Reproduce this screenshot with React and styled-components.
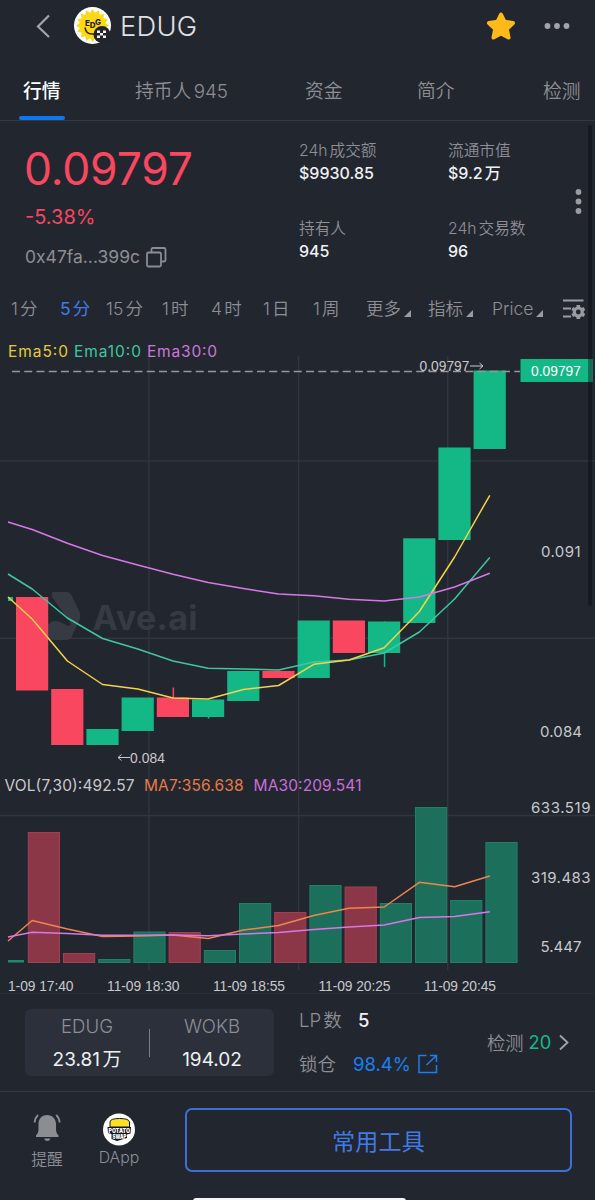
import React, { useState } from "react";
import styled, { createGlobalStyle, ThemeProvider } from "styled-components";

const theme = {
  bg: "#22262f",
  card: "#2b303b",
  line: "#353943",
  text: "#f0f1f3",
  muted: "#8d8f95",
  up: "#14b887",
  down: "#f8475f",
  blue: "#3f7be8",
  link: "#1a80f0",
};

const GlobalStyle = createGlobalStyle`
  * {
    box-sizing: border-box;
  }

  body {
    margin: 0;
    background: #22262f;
    font-family: Inter, "Noto Sans CJK SC", sans-serif;
    text-autospace: normal;
  }

  button {
    font-family: inherit;
    background: none;
    border: none;
    padding: 0;
    cursor: pointer;
  }
`;

const Page = styled.div`
  position: relative;
  width: 595px;
  height: 1200px;
  overflow: hidden;
  display: flex;
  flex-direction: column;
  background: ${({ theme }) => theme.bg};
  color: ${({ theme }) => theme.muted};
  white-space: nowrap;
`;

const ScrollThumb = styled.div`
  position: absolute;
  top: 125px;
  right: 3px;
  width: 4px;
  height: 481px;
  border-radius: 2px;
  background: rgba(10, 10, 16, 0.42);
`;

// Header
const Header = styled.header`
  flex: none;
  display: flex;
  align-items: center;
  height: 52px;
  padding: 0 24px 0 36px;
`;

const Avatar = styled.svg`
  margin: 0 8px 0 24px;
`;

const TokenName = styled.h1`
  flex: 1;
  margin: 0;
  padding-top: 2px;
  font-size: 27.3px;
  line-height: 52px;
  font-weight: 350;
  letter-spacing: 0.3px;
  color: #e0e1e4;
`;

const MoreIcon = styled.svg`
  margin-left: 27px;
`;

// Tabs
const TabBar = styled.nav`
  flex: none;
  display: grid;
  grid-template-columns: 116px 170px 112px 126px 52px;
  height: 69px;
  padding-left: 19px;
  border-bottom: 1px solid ${({ theme }) => theme.line};
`;

const Tab = styled.button`
  display: flex;
  flex-direction: column;
  justify-content: space-between;
  justify-self: start;
  align-items: flex-start;
  padding-top: 26px;
  font-size: 18.8px;
  line-height: 28px;
  font-weight: ${({ $active }) => ($active ? 500 : 350)};
  color: ${({ $active, theme }) => ($active ? "#fff" : theme.muted)};

  &::after {
    content: "";
    height: 4px;
    width: ${({ $active }) => ($active ? 46 : 0)}px;
    border-radius: 2px;
    background: #0a78f5;
  }
`;

const TabText = styled.span`
  padding-left: ${({ $active }) => ($active ? 4 : 0)}px;
`;

// Price summary
const Summary = styled.section`
  flex: none;
  display: grid;
  grid-template-columns: 274px 149px 122px 10px;
  height: 169px;
  padding: 19px 0 0 25px;
`;

const PriceBlock = styled.div`
  display: flex;
  flex-direction: column;
  padding-top: 5px;
  color: ${({ theme }) => theme.down};
`;

const Price = styled.div`
  font-size: 44.5px;
  line-height: 48px;
  letter-spacing: -0.2px;
  margin-left: -1px;
`;

const Change = styled.div`
  margin-top: 12px;
  font-size: 20px;
  line-height: 24px;
`;

const Address = styled.div`
  display: flex;
  align-items: center;
  gap: 6px;
  margin-top: 16px;
  font-size: 17.5px;
  line-height: 24px;
  color: ${({ theme }) => theme.muted};
`;

const StatColumn = styled.div`
  display: flex;
  flex-direction: column;
  gap: 34px;
`;

const Stat = styled.div`
  display: grid;
  grid-template-rows: 22px 22px;
  line-height: 22px;
`;

const StatLabel = styled.span`
  font-size: 15.7px;
  font-weight: 350;
`;

const StatValue = styled.span`
  font-size: 16px;
  font-weight: 450;
  color: ${({ theme }) => theme.text};
`;

const Kebab = styled.svg`
  margin-top: 48px;
`;

// Interval bar
const Intervals = styled.div`
  flex: none;
  display: grid;
  grid-template-columns: 49px 46px 56px 49px 52px 50px 53px 62px 64px 71px 24px;
  align-items: center;
  height: 40px;
  padding: 0 0 3px 11px;
`;

const Interval = styled.button`
  display: flex;
  align-items: baseline;
  font-size: 17.5px;
  line-height: 28px;
  font-weight: ${({ $active }) => ($active ? 400 : 350)};
  color: ${({ $active, theme }) => ($active ? theme.blue : theme.muted)};
`;

const Corner = styled.i`
  margin-left: 3px;
  border-left: 7px solid transparent;
  border-bottom: 7px solid #9a9ca1;
  transform: translateY(2px);
`;

const Chart = styled.svg`
  flex: none;
  display: block;
  font-family: Inter, sans-serif;
`;

// Pool info
const Pool = styled.section`
  flex: none;
  display: grid;
  grid-template-columns: 249px 163px auto;
  column-gap: 25px;
  height: 97px;
  padding: 14px 0 0 25px;
  border-bottom: 1px solid ${({ theme }) => theme.line};
`;

const PairCard = styled.div`
  display: flex;
  align-items: center;
  height: 67px;
  border-radius: 6px;
  background: ${({ theme }) => theme.card};
`;

const PairSide = styled.div`
  flex: 1;
  display: flex;
  flex-direction: column;
  align-items: center;
  gap: 10px;
  font-size: 18.6px;
  line-height: 24px;
  font-weight: 350;

  strong {
    font-size: 19px;
    font-weight: 400;
    color: ${({ theme }) => theme.text};
  }
`;

const PairDivider = styled.span`
  width: 1px;
  height: 28px;
  background: #7b7e86;
`;

const PoolList = styled.div`
  display: grid;
  grid-template-columns: 42px 1fr;
  grid-template-rows: 24px 24px;
  row-gap: 20px;
  column-gap: 12px;
  align-items: center;
  align-content: start;
  margin-top: -1px;
  font-size: 18.5px;
  line-height: 24px;
  font-weight: 350;
`;

const PoolValue = styled.span`
  display: flex;
  align-items: center;
  gap: 7px;
  padding-left: ${({ $link }) => ($link ? 0 : 5)}px;
  font-weight: ${({ $link }) => ($link ? 400 : 500)};
  color: ${({ $link, theme }) => ($link ? theme.link : theme.text)};
`;

const Audit = styled.div`
  display: flex;
  align-items: center;
  gap: 5px;
  height: 66px;
  font-size: 18.3px;
  font-weight: 350;

  b {
    font-weight: 400;
    color: ${({ theme }) => theme.up};
    margin-right: 2px;
  }
`;

// Bottom bar
const Footer = styled.footer`
  position: relative;
  flex: 1;
  display: flex;
  align-items: flex-start;
  padding: 16px 23px 0 24px;
`;

const FooterItem = styled.button`
  display: flex;
  flex-direction: column;
  align-items: center;
  gap: ${({ $gap }) => $gap}px;
  width: ${({ $width }) => $width}px;
  padding-top: 5px;
  font-size: 15.8px;
  line-height: 24px;
  font-weight: 350;
  color: ${({ theme }) => theme.muted};
`;

const ToolsButton = styled.button`
  width: 387px;
  height: 64px;
  margin-left: auto;
  border: 2px solid #3b70da;
  border-radius: 7px;
  font-size: 23px;
  font-weight: 400;
  letter-spacing: 0.3px;
  color: ${({ theme }) => theme.blue};
`;

const HomeIndicator = styled.div`
  position: absolute;
  bottom: -4px;
  left: 193px;
  width: 213px;
  height: 6px;
  border-radius: 3px;
  background: #f4f4f6;
`;

const tabs = ["行情", "持币人945", "资金", "简介", "检测"];
const intervals = ["1分", "5分", "15分", "1时", "4时", "1日", "1周"];
const menus = ["更多", "指标", "Price"];

// body top, body bottom, direction, optional wick range
const candles = [
  [597, 690.5, "down"],
  [689, 745, "down"],
  [729, 745, "up"],
  [697.5, 731, "up"],
  [697.5, 717, "down", 687.5, 717],
  [699.5, 717, "up", 699.5, 718.5],
  [671, 701, "up"],
  [671, 678, "down"],
  [620.5, 678, "up"],
  [620.5, 653, "down"],
  [621.5, 653, "up", 621.5, 667],
  [538.3, 623, "up"],
  [447.5, 540, "up"],
  [370.5, 449, "up"],
];

const volumes = [
  [832, "down"], [953, "down"], [959, "up"], [931.5, "up"], [932, "down"],
  [950, "up"], [903, "up"], [912, "down"], [885, "up"], [886.5, "down"],
  [903, "up"], [807, "up"], [900, "up"], [842, "up"],
];

const STEP = 35.2;

const lines = [
  { color: "#3fc79f", ys: [574, 589, 618, 638.5, 649, 661, 668.3, 669, 670, 662, 660, 653, 632, 599, 557.5] },
  { color: "#f5d24a", ys: [597, 619, 661, 684.5, 689, 698, 699, 689.5, 685.5, 664.3, 660, 647.7, 611.5, 557, 495.3] },
  { color: "#d878e6", ys: [522, 529.5, 543.3, 555.5, 565, 574.3, 582.5, 588.5, 594, 595.7, 599.3, 601, 597, 587, 573.3] },
  { color: "#ef8450", ys: [941, 920.5, 929, 936.5, 936, 935, 938.5, 930, 925.5, 915.5, 908.3, 907, 882.3, 886.7, 876] },
  { color: "#d878e6", ys: [937, 932.3, 933.5, 935.3, 935.3, 935, 935.8, 934, 932.5, 929.5, 927, 925, 917.5, 916.5, 911.7] },
];

const toPoints = (ys) =>
  ys.map((y, i) => `${i === 0 ? 8 : (32.2 + STEP * (i - 1)).toFixed(1)},${y}`).join(" ");

const KLineChart = () => (
  <Chart width="595" height="665" viewBox="0 330 595 665">
    <g stroke="#31353f" strokeWidth="1.5">
      {[149, 298.6, 447.7].map((x) => (
        <line key={x} x1={x} x2={x} y1="356" y2="970" />
      ))}
      {[461, 638.3, 815.5].map((y) => (
        <line key={y} x1="0" x2="595" y1={y} y2={y} />
      ))}
      <line x1="0" x2="595" y1="993.5" y2="993.5" stroke="#2a2e37" strokeWidth="1" />
    </g>

    <g fill="#363a43">
      <path d="M52 592H66Q70 592 72 596L79.5 612Q81 616 79.5 620L72 636Q70 640 66 640H54Q50 640 48 636V625Q53 619 60 622L68 626Q72 626 70 622L52 597Z" />
      <text x="92.5" y="630" fontSize="34" fontWeight="700" textLength="105">
        Ave.ai
      </text>
    </g>

    <rect x="8" y="597" width="5" height="4" fill="#14b887" />
    {candles.map(([top, bottom, dir, high, low], i) => {
      const x = 16 + STEP * i;
      const fill = dir === "up" ? "#14b887" : "#f8475f";
      return (
        <g key={i} fill={fill}>
          <rect x={x} y={top} width="32.2" height={bottom - top} />
          {high && <rect x={x + 15.8} y={high} width="1.5" height={low - high} />}
        </g>
      );
    })}

    <rect x="8" y="960" width="16" height="2.5" fill="#20886a" />
    {volumes.map(([top, dir], i) => (
      <rect
        key={i}
        x={28.3 + STEP * i}
        y={top + 0.5}
        width="31.2"
        height={962 - top}
        fill={dir === "up" ? "#1c6f5a" : "#8b3748"}
        stroke={dir === "up" ? "#20806a" : "#a04055"}
      />
    ))}

    {lines.map(({ color, ys }, i) => (
      <polyline
        key={i}
        points={toPoints(ys)}
        fill="none"
        stroke={color}
        strokeWidth="1.5"
        strokeLinejoin="round"
      />
    ))}

    <line x1="12" x2="520" y1="371.6" y2="371.6" stroke="#94969b" strokeWidth="1.5" strokeDasharray="8 4.25" />
    <rect x="520.5" y="359" width="72" height="23" fill="#14b887" />

    <g fontSize="15.5">
      <text x="8" y="357" fill="#e6c93c" textLength="60">Ema5:0</text>
      <text x="74" y="357" fill="#3fc79f" textLength="67">Ema10:0</text>
      <text x="147" y="357" fill="#c978da" textLength="70">Ema30:0</text>
      <text x="4.5" y="790.5" fill="#c8c9cc" textLength="130">VOL(7,30):492.57</text>
      <text x="144" y="790.5" fill="#e67a4a" textLength="99.5">MA7:356.638</text>
      <text x="253.5" y="790.5" fill="#c96edb" textLength="108">MA30:209.541</text>
    </g>

    <g fill="#c8c9cc" fontSize="15">
      <text x="541" y="557" textLength="39.5">0.091</text>
      <text x="540" y="737" textLength="42">0.084</text>
      <text x="531" y="813" textLength="59.5">633.519</text>
      <text x="531" y="883" textLength="59.5">319.483</text>
      <text x="540.5" y="952" textLength="41">5.447</text>
    </g>

    <g fill="#c8c9cc" fontSize="13.8" fontFamily="Liberation Sans">
      <text x="531" y="376" fill="#fff" textLength="50">0.09797</text>
      <text x="419.5" y="371" textLength="50">0.09797</text>
      <text x="130" y="762.5" textLength="35">0.084</text>
      <path
        d="M470 366H483M479.5 363L483 366L479.5 369M130 757.5H118M121.5 754.5L118 757.5L121.5 760.5"
        fill="none"
        stroke="#c8c9cc"
      />
      <text x="8" y="991" textLength="65.5">1-09 17:40</text>
      <text x="107" y="991" textLength="72.5">11-09 18:30</text>
      <text x="213" y="991" textLength="72">11-09 18:55</text>
      <text x="318.5" y="991" textLength="72">11-09 20:25</text>
      <text x="424" y="991" textLength="72">11-09 20:45</text>
    </g>
  </Chart>
);

const sunRays = Array.from({ length: 32 }, (_, i) => {
  const r = i % 2 ? 13 : 16.5;
  const a = (i * Math.PI) / 16;
  return `${(18.5 + r * Math.sin(a)).toFixed(2)},${(18.5 - r * Math.cos(a)).toFixed(2)}`;
}).join(" ");

const TokenAvatar = () => (
  <Avatar width="38" height="38" viewBox="0 0 38 38">
    <circle cx="18.5" cy="18.5" r="18.5" fill="#fff" />
    <polygon points={sunRays} fill="#fbd916" />
    <g fontFamily="Inter" fontWeight="800" fontSize="8" fill="#2b2508">
      <text x="11" y="18.5">E</text>
      <text x="15.8" y="20.5">D</text>
      <text x="21" y="17.5">G</text>
    </g>
    <path d="M11 20.5Q12 28 20 27" fill="none" stroke="#2b2508" strokeWidth="1.5" />
    <circle cx="28" cy="27.5" r="8.5" fill="#23252b" />
    <path
      d="M23 23.5h3v2.5h-3zM29 23.5h3v2.5h-3zM26 26h3v2.500h-3zM23 28.5h3v2.5h-3zM29 28.5h3v2.5h-3z"
      fill="#f3f3f3"
    />
  </Avatar>
);

const CopyIcon = () => (
  <svg width="21" height="21" viewBox="0 0 21 21" fill="none" stroke="#8b8d93" strokeWidth="1.8">
    <rect x="1" y="5.5" width="14" height="14" rx="1.5" />
    <path d="M5.5 5V2.5Q5.5 1 7 1H18Q19.5 1 19.5 2.5V13Q19.5 14.5 18 14.5H15.5" />
  </svg>
);

const SettingsIcon = () => (
  <svg width="24" height="22" viewBox="0 0 24 22" fill="none" stroke="#9a9ca1">
    <path d="M0 2.5H20.5M0 10.5H8M0 18.5H8" strokeWidth="2.2" />
    <circle cx="15.3" cy="14" r="4" strokeWidth="3.2" />
    <path
      d="M15.3 7v2M15.3 19v2M9.2 10.5l1.8 1M19.6 16.5l1.8 1M9.2 17.5l1.8-1M19.6 11.5l1.8-1"
      strokeWidth="3.6"
    />
  </svg>
);

const BellIcon = () => (
  <svg width="28" height="29" viewBox="0 0 28 29">
    <path
      d="M14 2C8.5 2 5.5 6 5.5 11V17Q5.5 20 3 22.5V24H25.5V22.5Q23 20 23 17V11C23 6 19.5 2 14 2Z"
      fill="#8b8d93"
    />
    <path d="M11 25.5H17.5Q16.5 28 14.3 28T11 25.5Z" fill="#8b8d93" />
    <path d="M5 2Q2.3 4.5 1.5 9.5M23.2 2Q26 4.5 26.7 9.5" fill="none" stroke="#8b8d93" strokeWidth="1.8" />
  </svg>
);

const PotatoIcon = () => (
  <svg width="32" height="33" viewBox="0 0 32 33">
    <circle cx="16" cy="16.5" r="16" fill="#fff" />
    <path d="M7 14V9Q7 5.5 16.5 5.5T26.5 9V14Z" fill="#fbe122" stroke="#17151c" strokeWidth="1" />
    <path d="M4.5 14H28L27.5 20.5L24 21.5V25L14 28L8.5 26V21L5 20Z" fill="#17151c" />
    <g fill="#fff" fontFamily="Inter" fontWeight="900" fontSize="6">
      <text x="5.5" y="19.5" textLength="21.5" lengthAdjust="spacingAndGlyphs">POTATO</text>
      <text x="9.5" y="25.8" textLength="14" lengthAdjust="spacingAndGlyphs">SWAP</text>
    </g>
  </svg>
);

const App = () => {
  const [tab, setTab] = useState("行情");
  const [interval, setActiveInterval] = useState("5分");

  return (
    <ThemeProvider theme={theme}>
      <GlobalStyle />
      <Page>
        <Header>
          <svg width="14" height="26" viewBox="0 0 14 26" fill="none" stroke="#a2a4a9" strokeWidth="2.2">
            <path d="M13 2.5L2 13.5L13 24" />
          </svg>
          <TokenAvatar />
          <TokenName>EDUG</TokenName>
          <svg width="30" height="30" viewBox="0 0 30 30">
            <path
              d="M15 3.5L18.5 10.7L27 12L20.8 18L22.5 26.5L15 22.6L7.5 26.5L9.2 18L3 12L11.5 10.7Z"
              fill="#feb91a"
              stroke="#feb91a"
              strokeWidth="4"
              strokeLinejoin="round"
            />
          </svg>
          <MoreIcon width="28" height="8" viewBox="0 0 28 8" fill="#a2a4a9">
            <circle cx="4.5" cy="4" r="2.9" />
            <circle cx="14" cy="4" r="2.9" />
            <circle cx="23.5" cy="4" r="2.9" />
          </MoreIcon>
        </Header>

        <TabBar>
          {tabs.map((name) => (
            <Tab key={name} $active={tab === name} onClick={() => setTab(name)}>
              <TabText $active={tab === name}>{name}</TabText>
            </Tab>
          ))}
        </TabBar>

        <Summary>
          <PriceBlock>
            <Price>0.09797</Price>
            <Change>-5.38%</Change>
            <Address>
              0x47fa...399c
              <CopyIcon />
            </Address>
          </PriceBlock>
          <StatColumn>
            <Stat>
              <StatLabel>24h成交额</StatLabel>
              <StatValue>$9930.85</StatValue>
            </Stat>
            <Stat>
              <StatLabel>持有人</StatLabel>
              <StatValue>945</StatValue>
            </Stat>
          </StatColumn>
          <StatColumn>
            <Stat>
              <StatLabel>流通市值</StatLabel>
              <StatValue>$9.2万</StatValue>
            </Stat>
            <Stat>
              <StatLabel>24h交易数</StatLabel>
              <StatValue>96</StatValue>
            </Stat>
          </StatColumn>
          <Kebab width="16" height="28" viewBox="0 0 16 28" fill="#9a9ca1">
            <circle cx="8.5" cy="4" r="2.9" />
            <circle cx="8.5" cy="13.5" r="2.9" />
            <circle cx="8.5" cy="23" r="2.9" />
          </Kebab>
        </Summary>

        <Intervals>
          {intervals.map((name) => (
            <Interval key={name} $active={interval === name} onClick={() => setActiveInterval(name)}>
              {name}
            </Interval>
          ))}
          {menus.map((name) => (
            <Interval key={name}>
              {name}
              <Corner />
            </Interval>
          ))}
          <SettingsIcon />
        </Intervals>

        <KLineChart />

        <Pool>
          <PairCard>
            <PairSide>
              EDUG
              <strong>23.81万</strong>
            </PairSide>
            <PairDivider />
            <PairSide>
              WOKB
              <strong>194.02</strong>
            </PairSide>
          </PairCard>
          <PoolList>
            <span>LP数</span>
            <PoolValue>5</PoolValue>
            <span>锁仓</span>
            <PoolValue $link>
              98.4%
              <svg width="20" height="20" viewBox="0 0 20 20" fill="none" stroke="#1a80f0" strokeWidth="1.5">
                <path d="M8.5 1.5H1V18.5H18.5V11M12 1.5H18.5V8M18 2L8.5 11" />
              </svg>
            </PoolValue>
          </PoolList>
          <Audit>
            检测
            <b>20</b>
            <svg width="12" height="17" viewBox="0 0 12 17" fill="none" stroke="#a2a4a9" strokeWidth="1.8">
              <path d="M2 1.5L9.5 8.5L2 15.5" />
            </svg>
          </Audit>
        </Pool>

        <Footer>
          <FooterItem $width={46} $gap={6}>
            <BellIcon />
            提醒
          </FooterItem>
          <FooterItem $width={98} $gap={0}>
            <PotatoIcon />
            DApp
          </FooterItem>
          <ToolsButton>常用工具</ToolsButton>
          <HomeIndicator />
        </Footer>
        <ScrollThumb />
      </Page>
    </ThemeProvider>
  );
};

export default App;
